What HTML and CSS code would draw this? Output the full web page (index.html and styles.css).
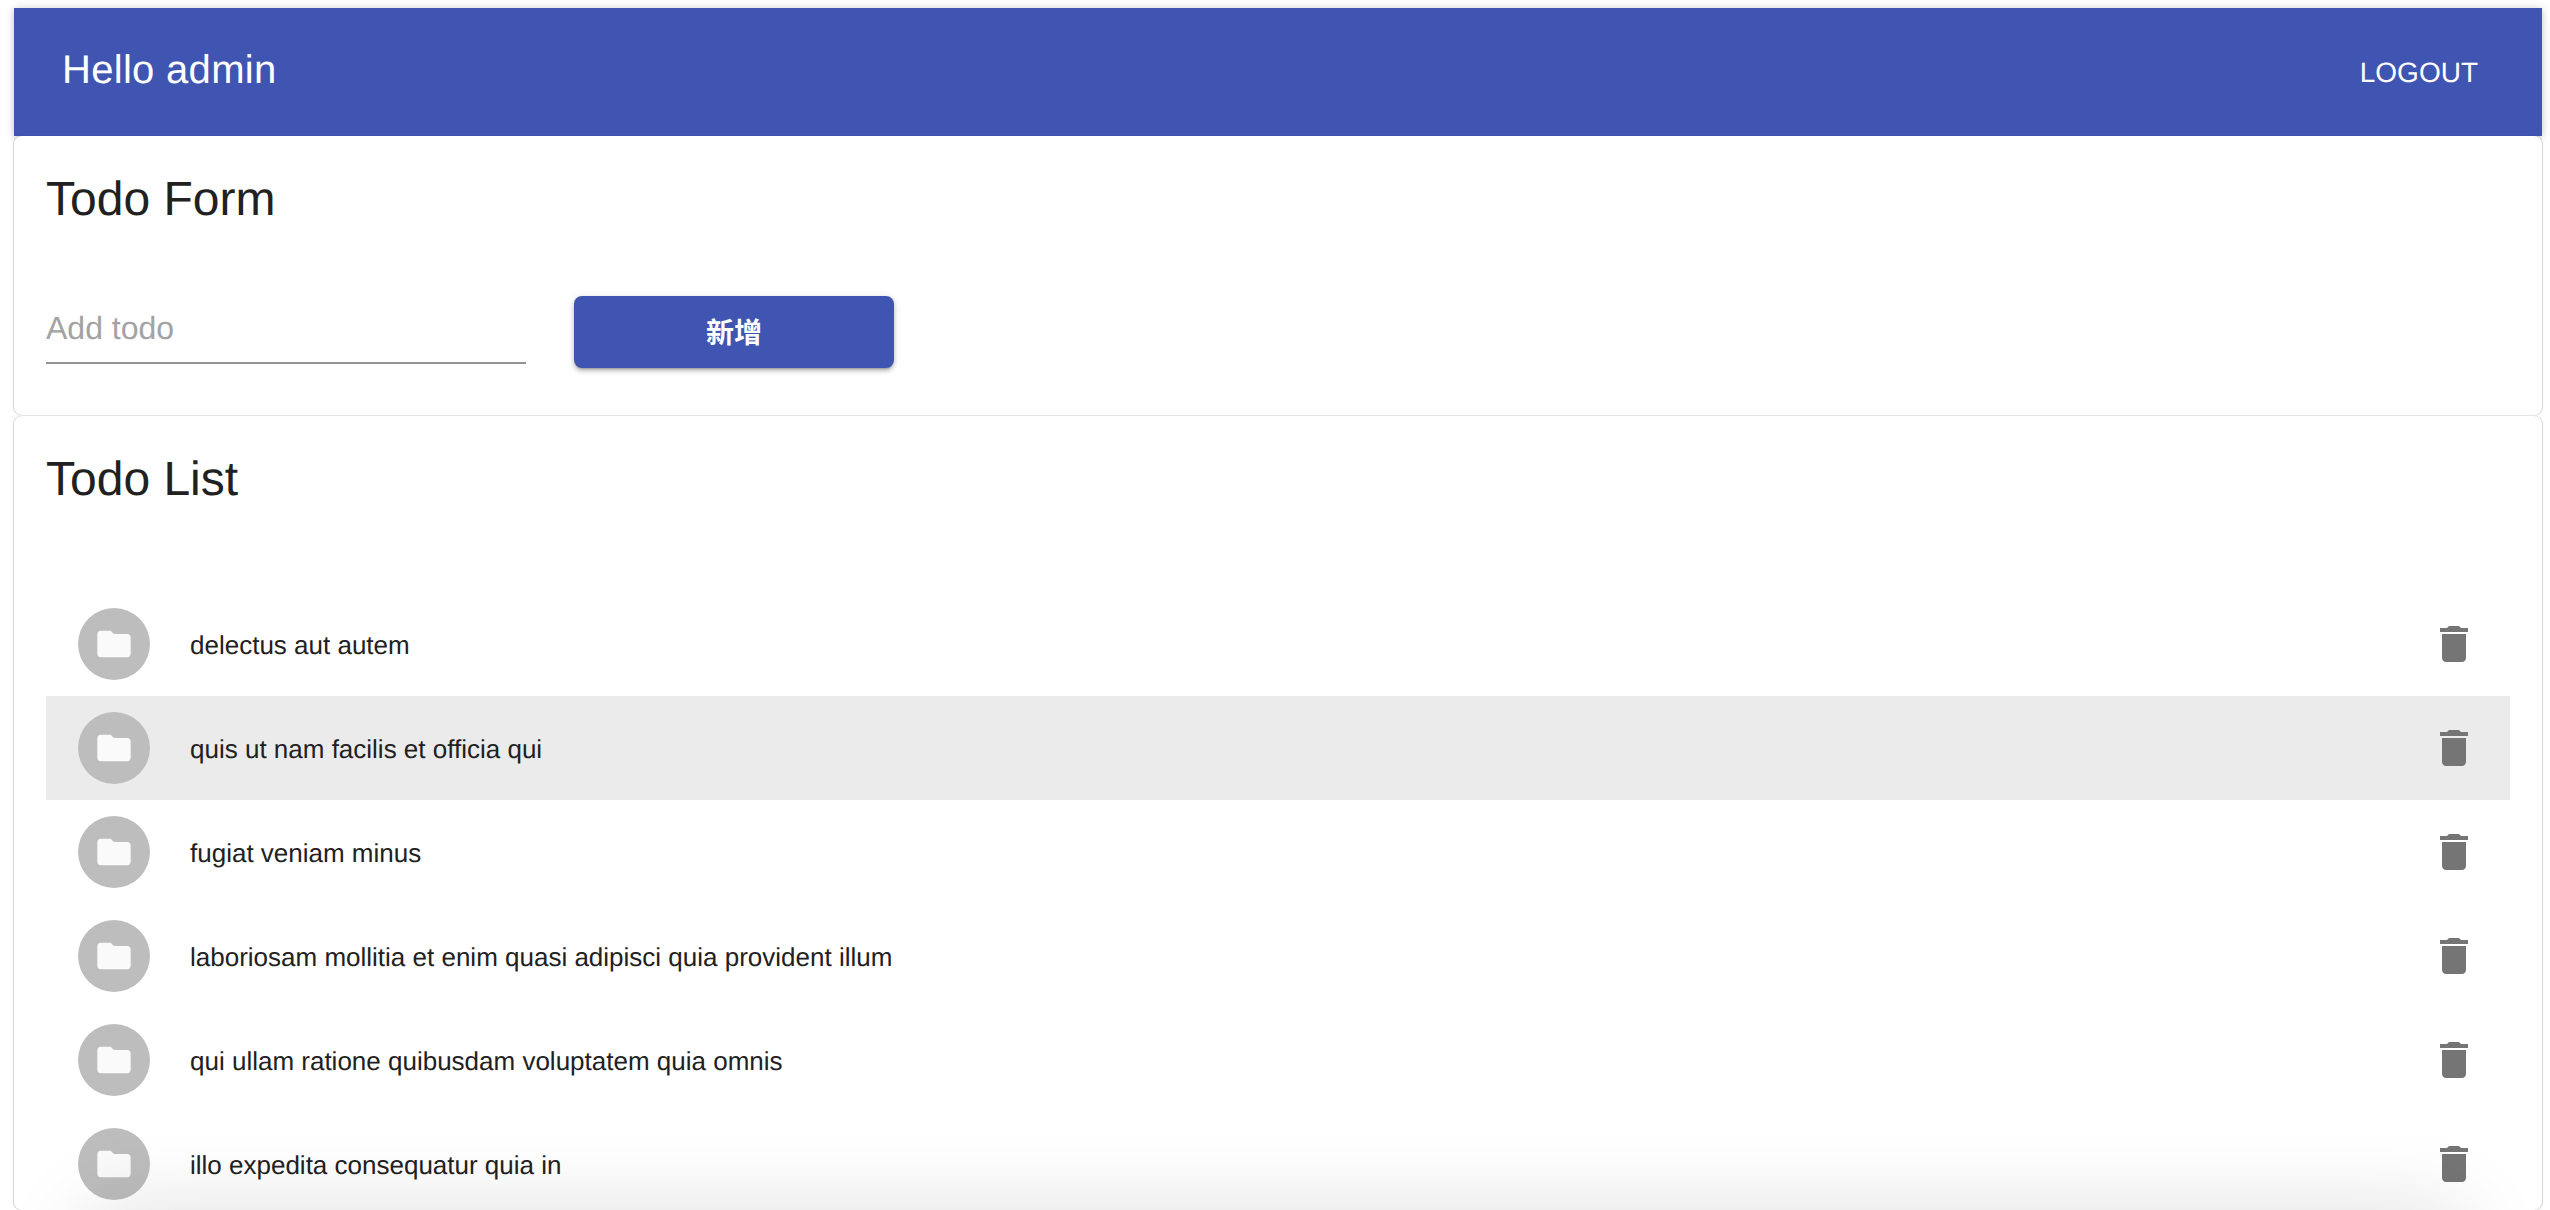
FILE: index.html
```html
<!DOCTYPE html>
<html lang="en">
<head>
<meta charset="utf-8">
<title>Todo</title>
<link rel="stylesheet" href="styles.css">
</head>
<body>
<div class="app">
  <header class="appbar">
    <h1 class="appbar-title">Hello admin</h1>
    <button class="logout" type="button">LOGOUT</button>
  </header>
  <section class="card card-form">
    <h2 class="card-title">Todo Form</h2>
    <form class="todo-form">
      <input class="todo-input" type="text" placeholder="Add todo">
      <button class="add-btn" type="button">新增</button>
    </form>
  </section>
  <section class="card card-list">
    <h2 class="card-title">Todo List</h2>
    <ul class="list">
      <li class="row">
        <span class="avatar"><svg class="folder" viewBox="0 0 24 24"><path d="M10 4H4c-1.1 0-1.99.9-1.99 2L2 18c0 1.1.9 2 2 2h16c1.1 0 2-.9 2-2V8c0-1.1-.9-2-2-2h-8l-2-2z"/></svg></span>
        <span class="row-text">delectus aut autem</span>
        <svg class="trash" viewBox="0 0 24 24"><path d="M6 19c0 1.1.9 2 2 2h8c1.1 0 2-.9 2-2V7H6v12zM19 4h-3.5l-1-1h-5l-1 1H5v2h14V4z"/></svg>
      </li>
      <li class="row row-hover">
        <span class="avatar"><svg class="folder" viewBox="0 0 24 24"><path d="M10 4H4c-1.1 0-1.99.9-1.99 2L2 18c0 1.1.9 2 2 2h16c1.1 0 2-.9 2-2V8c0-1.1-.9-2-2-2h-8l-2-2z"/></svg></span>
        <span class="row-text">quis ut nam facilis et officia qui</span>
        <svg class="trash" viewBox="0 0 24 24"><path d="M6 19c0 1.1.9 2 2 2h8c1.1 0 2-.9 2-2V7H6v12zM19 4h-3.5l-1-1h-5l-1 1H5v2h14V4z"/></svg>
      </li>
      <li class="row">
        <span class="avatar"><svg class="folder" viewBox="0 0 24 24"><path d="M10 4H4c-1.1 0-1.99.9-1.99 2L2 18c0 1.1.9 2 2 2h16c1.1 0 2-.9 2-2V8c0-1.1-.9-2-2-2h-8l-2-2z"/></svg></span>
        <span class="row-text">fugiat veniam minus</span>
        <svg class="trash" viewBox="0 0 24 24"><path d="M6 19c0 1.1.9 2 2 2h8c1.1 0 2-.9 2-2V7H6v12zM19 4h-3.5l-1-1h-5l-1 1H5v2h14V4z"/></svg>
      </li>
      <li class="row">
        <span class="avatar"><svg class="folder" viewBox="0 0 24 24"><path d="M10 4H4c-1.1 0-1.99.9-1.99 2L2 18c0 1.1.9 2 2 2h16c1.1 0 2-.9 2-2V8c0-1.1-.9-2-2-2h-8l-2-2z"/></svg></span>
        <span class="row-text">laboriosam mollitia et enim quasi adipisci quia provident illum</span>
        <svg class="trash" viewBox="0 0 24 24"><path d="M6 19c0 1.1.9 2 2 2h8c1.1 0 2-.9 2-2V7H6v12zM19 4h-3.5l-1-1h-5l-1 1H5v2h14V4z"/></svg>
      </li>
      <li class="row">
        <span class="avatar"><svg class="folder" viewBox="0 0 24 24"><path d="M10 4H4c-1.1 0-1.99.9-1.99 2L2 18c0 1.1.9 2 2 2h16c1.1 0 2-.9 2-2V8c0-1.1-.9-2-2-2h-8l-2-2z"/></svg></span>
        <span class="row-text">qui ullam ratione quibusdam voluptatem quia omnis</span>
        <svg class="trash" viewBox="0 0 24 24"><path d="M6 19c0 1.1.9 2 2 2h8c1.1 0 2-.9 2-2V7H6v12zM19 4h-3.5l-1-1h-5l-1 1H5v2h14V4z"/></svg>
      </li>
      <li class="row">
        <span class="avatar"><svg class="folder" viewBox="0 0 24 24"><path d="M10 4H4c-1.1 0-1.99.9-1.99 2L2 18c0 1.1.9 2 2 2h16c1.1 0 2-.9 2-2V8c0-1.1-.9-2-2-2h-8l-2-2z"/></svg></span>
        <span class="row-text">illo expedita consequatur quia in</span>
        <svg class="trash" viewBox="0 0 24 24"><path d="M6 19c0 1.1.9 2 2 2h8c1.1 0 2-.9 2-2V7H6v12zM19 4h-3.5l-1-1h-5l-1 1H5v2h14V4z"/></svg>
      </li>
    </ul>
  </section>
</div>
<div class="bottom-fade"></div>
</body>
</html>
```

FILE: styles.css
```css
* { box-sizing: border-box; }
html, body { height: 100%; }
body {
  margin: 0;
  background: #fff;
  overflow: hidden;
  font-family: "Liberation Sans", Arial, sans-serif;
  color: #212121;
  text-rendering: geometricPrecision;
  -webkit-font-smoothing: antialiased;
}
.app { height: 100%; overflow: hidden; padding: 8px 8px 0 14px; }

.appbar {
  height: 128px;
  display: flex;
  align-items: center;
  justify-content: space-between;
  padding: 0 32px 0 48px;
  background: #4055b2;
  color: #fff;
  box-shadow: 0 2px 6px rgba(0,0,0,.14), 0 0 10px rgba(0,0,0,.12);
}
.appbar-title { margin: -4px 0 0; font-size: 40px; letter-spacing: .3px; font-weight: 400; line-height: 1.6; }
.logout {
  border: 0;
  background: none;
  color: #fff;
  font: 400 28px/1.75 "Liberation Sans", Arial, sans-serif;
  text-rendering: geometricPrecision;
  padding: 12px 32px 12px 0;
}

.card {
  position: relative;
  background: #fff;
  border-radius: 8px;
  padding: 32px;
  box-shadow: -1px 0 1px rgba(0,0,0,.16), 1px 0 1px rgba(0,0,0,.16), 0 1px 1px rgba(0,0,0,.05);
}
.card-form { height: 279px; margin-bottom: 1px; }
.card-list { height: 794px; }
.card-title { margin: 0; font-size: 48px; font-weight: 400; line-height: 64px; color: #212121; }

.todo-form { display: flex; align-items: flex-start; gap: 48px; margin-top: 64px; }
.todo-input {
  width: 480px;
  height: 68px;
  border: 0;
  border-bottom: 2px solid #949494;
  outline: 0;
  padding: 0 0 1px;
  font: 400 32px "Liberation Sans", Arial, sans-serif;
  text-rendering: geometricPrecision;
  background: none;
}
.todo-input::placeholder { color: #a3a3a3; opacity: 1; }
.add-btn {
  width: 320px;
  height: 72px;
  padding: 0 0 3px;
  border: 0;
  border-radius: 8px;
  background: #4055b2;
  color: #fff;
  font: 700 28px "Noto Sans CJK SC", "Liberation Sans", sans-serif;
  box-shadow: 0 3px 2px -2px rgba(0,0,0,.2), 0 3px 4px 0 rgba(0,0,0,.2), 0 1px 8px 0 rgba(0,0,0,.12);
}

.list { list-style: none; margin: 80px 0 0; padding: 0; }
.row {
  height: 104px;
  display: flex;
  align-items: center;
  padding: 0 32px;
}
.row-hover { background: #ebebeb; }
.avatar {
  flex: none;
  width: 72px;
  height: 72px;
  border-radius: 50%;
  background: #bdbdbd;
  display: flex;
  align-items: center;
  justify-content: center;
}
.folder { width: 40px; height: 40px; fill: #fafafa; }
.row-text { flex: 1; margin: 2px 0 0 40px; font-size: 26px; color: #212121; }
.trash { flex: none; width: 48px; height: 48px; fill: #757575; }

.bottom-fade {
  position: fixed;
  left: 0;
  right: 0;
  bottom: 0;
  height: 110px;
  overflow: hidden;
  z-index: 5;
  pointer-events: none;
}
.bottom-fade::after {
  content: "";
  position: absolute;
  left: 100px;
  right: 100px;
  top: 125px;
  height: 100px;
  box-shadow: 0 0 90px 10px rgba(0,0,0,.14);
}
```
